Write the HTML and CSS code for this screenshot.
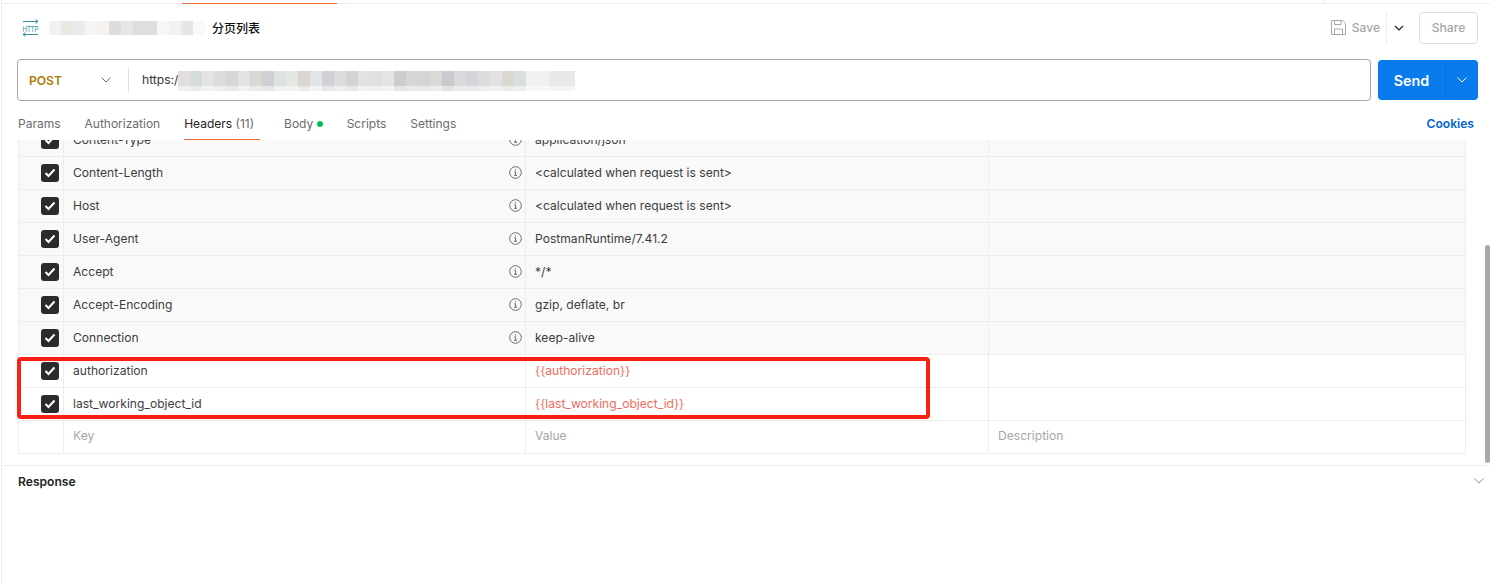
FILE: index.html
```html
<!DOCTYPE html>
<html lang="en">
<head>
    <meta charset="UTF-8">
    <title>分页列表</title>
    <link rel="stylesheet" href="styles.css">
</head>
<body>
    <div class="app">
        <div class="top-strip"><div class="top-tab"></div><div class="top-tab-end"></div></div>

        <div class="req-head">
            <svg class="http-icon" width="18" height="18" viewBox="0 0 18 18" fill="none" stroke="#2f8f9d" stroke-width="1">
                <path d="M1 2.500h15M13.500 .5l2.500 2-2.500 2M1 15.500h15M3.500 13.500l-2.500 2 2.500 2"/>
                <text x="0.500" y="12.500" class="http-text" textLength="16" lengthAdjust="spacingAndGlyphs">HTTP</text>
            </svg>
            <div class="mosaic-title"></div>
            <span class="req-name">分页列表</span>
            <div class="head-actions">
                <svg class="save-icon" width="15" height="15" viewBox="0 0 15 15" fill="none" stroke="#a6a6a6" stroke-width="1">
                    <path d="M.5.500h11l3 3v11H.5z"/>
                    <path d="M3.500.500v4h6.500v-4M3.500 14.500v-5.500h8v5.500"/>
                </svg>
                <span class="save-text">Save</span>
                <div class="save-divider"></div>
                <svg class="save-caret" width="10" height="6" viewBox="0 0 10 6" fill="none" stroke="#212121" stroke-width="1.200"><path d="M1 1l4 4 4-4"/></svg>
                <div class="share-btn">Share</div>
            </div>
        </div>

        <div class="url-row">
            <div class="url-bar">
                <div class="method">
                    <span>POST</span>
                    <svg width="10" height="6" viewBox="0 0 10 6" fill="none" stroke="#6b6b6b"><path d="M.5.500l4.500 4.500 4.500-4.500"/></svg>
                </div>
                <div class="url-text">https:/<div class="mosaic-url"></div></div>
            </div>
            <div class="send-btn">
                <span class="send-label">Send</span>
                <span class="send-caret">
                    <svg width="10" height="6" viewBox="0 0 10 6" fill="none" stroke="#fff"><path d="M.5.500l4.500 4.500 4.500-4.500"/></svg>
                </span>
            </div>
        </div>

        <div class="tabs">
            <span class="tab">Params</span>
            <span class="tab">Authorization</span>
            <span class="tab active">Headers <em>(11)</em></span>
            <span class="tab">Body <i class="dot"></i></span>
            <span class="tab">Scripts</span>
            <span class="tab">Settings</span>
            <span class="cookies">Cookies</span>
        </div>

        <div class="table-wrap">
            <div class="table">
                <div class="row auto">
                    <div class="cell check"><span class="box"><svg width="12" height="10" viewBox="0 0 12 10" fill="none" stroke="#fff" stroke-width="2"><path d="M1.500 5l3 3 6-6.500"/></svg></span></div>
                    <div class="cell key"><span>Content-Type</span><svg class="info" width="13" height="13" viewBox="0 0 13 13" fill="none" stroke="#6b6b6b"><circle cx="6.500" cy="6.500" r="5.800"/><path d="M5.300 5.800h1.300v3.200M5 9.300h3M6.500 3.300v1.200"/></svg></div>
                    <div class="cell">application/json</div>
                    <div class="cell"></div>
                </div>
                <div class="row auto">
                    <div class="cell check"><span class="box"><svg width="12" height="10" viewBox="0 0 12 10" fill="none" stroke="#fff" stroke-width="2"><path d="M1.500 5l3 3 6-6.500"/></svg></span></div>
                    <div class="cell key"><span>Content-Length</span><svg class="info" width="13" height="13" viewBox="0 0 13 13" fill="none" stroke="#6b6b6b"><circle cx="6.500" cy="6.500" r="5.800"/><path d="M5.300 5.800h1.300v3.200M5 9.300h3M6.500 3.300v1.200"/></svg></div>
                    <div class="cell">&lt;calculated when request is sent&gt;</div>
                    <div class="cell"></div>
                </div>
                <div class="row auto">
                    <div class="cell check"><span class="box"><svg width="12" height="10" viewBox="0 0 12 10" fill="none" stroke="#fff" stroke-width="2"><path d="M1.500 5l3 3 6-6.500"/></svg></span></div>
                    <div class="cell key"><span>Host</span><svg class="info" width="13" height="13" viewBox="0 0 13 13" fill="none" stroke="#6b6b6b"><circle cx="6.500" cy="6.500" r="5.800"/><path d="M5.300 5.800h1.300v3.200M5 9.300h3M6.500 3.300v1.200"/></svg></div>
                    <div class="cell">&lt;calculated when request is sent&gt;</div>
                    <div class="cell"></div>
                </div>
                <div class="row auto">
                    <div class="cell check"><span class="box"><svg width="12" height="10" viewBox="0 0 12 10" fill="none" stroke="#fff" stroke-width="2"><path d="M1.500 5l3 3 6-6.500"/></svg></span></div>
                    <div class="cell key"><span>User-Agent</span><svg class="info" width="13" height="13" viewBox="0 0 13 13" fill="none" stroke="#6b6b6b"><circle cx="6.500" cy="6.500" r="5.800"/><path d="M5.300 5.800h1.300v3.200M5 9.300h3M6.500 3.300v1.200"/></svg></div>
                    <div class="cell">PostmanRuntime/7.41.2</div>
                    <div class="cell"></div>
                </div>
                <div class="row auto">
                    <div class="cell check"><span class="box"><svg width="12" height="10" viewBox="0 0 12 10" fill="none" stroke="#fff" stroke-width="2"><path d="M1.500 5l3 3 6-6.500"/></svg></span></div>
                    <div class="cell key"><span>Accept</span><svg class="info" width="13" height="13" viewBox="0 0 13 13" fill="none" stroke="#6b6b6b"><circle cx="6.500" cy="6.500" r="5.800"/><path d="M5.300 5.800h1.300v3.200M5 9.300h3M6.500 3.300v1.200"/></svg></div>
                    <div class="cell">*/*</div>
                    <div class="cell"></div>
                </div>
                <div class="row auto">
                    <div class="cell check"><span class="box"><svg width="12" height="10" viewBox="0 0 12 10" fill="none" stroke="#fff" stroke-width="2"><path d="M1.500 5l3 3 6-6.500"/></svg></span></div>
                    <div class="cell key"><span>Accept-Encoding</span><svg class="info" width="13" height="13" viewBox="0 0 13 13" fill="none" stroke="#6b6b6b"><circle cx="6.500" cy="6.500" r="5.800"/><path d="M5.300 5.800h1.300v3.200M5 9.300h3M6.500 3.300v1.200"/></svg></div>
                    <div class="cell">gzip, deflate, br</div>
                    <div class="cell"></div>
                </div>
                <div class="row auto">
                    <div class="cell check"><span class="box"><svg width="12" height="10" viewBox="0 0 12 10" fill="none" stroke="#fff" stroke-width="2"><path d="M1.500 5l3 3 6-6.500"/></svg></span></div>
                    <div class="cell key"><span>Connection</span><svg class="info" width="13" height="13" viewBox="0 0 13 13" fill="none" stroke="#6b6b6b"><circle cx="6.500" cy="6.500" r="5.800"/><path d="M5.300 5.800h1.300v3.200M5 9.300h3M6.500 3.300v1.200"/></svg></div>
                    <div class="cell">keep-alive</div>
                    <div class="cell"></div>
                </div>
                <div class="row">
                    <div class="cell check"><span class="box"><svg width="12" height="10" viewBox="0 0 12 10" fill="none" stroke="#fff" stroke-width="2"><path d="M1.500 5l3 3 6-6.500"/></svg></span></div>
                    <div class="cell key"><span>authorization</span></div>
                    <div class="cell var">{{authorization}}</div>
                    <div class="cell"></div>
                </div>
                <div class="row">
                    <div class="cell check"><span class="box"><svg width="12" height="10" viewBox="0 0 12 10" fill="none" stroke="#fff" stroke-width="2"><path d="M1.500 5l3 3 6-6.500"/></svg></span></div>
                    <div class="cell key"><span>last_working_object_id</span></div>
                    <div class="cell var">{{last_working_object_id}}</div>
                    <div class="cell"></div>
                </div>
                <div class="row hint-row">
                    <div class="cell check"></div>
                    <div class="cell key hint"><span>Key</span></div>
                    <div class="cell hint">Value</div>
                    <div class="cell hint">Description</div>
                </div>
            </div>
            <div class="red-box"></div>
        </div>

        <div class="response">
            <span>Response</span>
            <svg width="10" height="6" viewBox="0 0 10 6" fill="none" stroke="#8c8c8c"><path d="M.5.500l4.500 4.500 4.500-4.500"/></svg>
        </div>

        <div class="scrollbar"></div>
    </div>
</body>
</html>
```

FILE: styles.css
```css
* {
    box-sizing: border-box;
    margin: 0;
    padding: 0;
}
body {
    width: 1490px;
    height: 584px;
    overflow: hidden;
    background-color: #fff;
    font-family: "Inter", "Noto Sans CJK SC", sans-serif;
    font-size: 12.100px;
    color: #212121;
}
.app {
    position: relative;
    height: 584px;
    margin-left: 1px;
    border-left: 1px solid #ededed;
}

/* top strip */
.top-strip {
    display: flex;
    height: 4px;
    border-bottom: 1px solid #ededed;
    padding-left: 180px;
}
.top-tab {
    width: 155px;
    height: 4px;
    border-bottom: 1px solid #f26b3a;
}
.top-tab-end {
    width: 1px;
    height: 3px;
    margin-left: 986px;
    background-color: #ededed;
}

/* request name */
.req-head {
    display: flex;
    align-items: center;
    height: 47px;
    padding-left: 20px;
}
.http-icon {
    overflow: visible;
}
.http-text {
    font-family: "Liberation Sans", sans-serif;
    font-size: 8.500px;
    fill: #2f8f9d;
    stroke: none;
}
.mosaic-title {
    width: 156px;
    height: 14px;
    margin-left: 9px;
    background: linear-gradient(90deg,
        #f2f2f2 0 12px, #e9e9e2 12px 24px, #e9ebed 24px 36px, #f5f5f5 36px 48px,
        #f6f2ef 48px 60px, #dddde0 60px 72px, #e7e7ea 72px 84px, #dedede 84px 108px,
        #f7f7f7 108px 120px, #f2f2f2 120px 132px, #e6e6e6 132px 144px, #fafafa 144px 156px);
}
.req-name {
    margin-left: 7px;
    font-size: 12px;
    font-weight: 500;
    color: #111;
}
.head-actions {
    display: flex;
    align-items: center;
    margin-left: auto;
    padding-right: 12px;
}
.save-text {
    margin-left: 6px;
    color: #a6a6a6;
    font-weight: 500;
}
.save-divider {
    width: 1px;
    height: 32px;
    margin-left: 6px;
    background-color: #ededed;
}
.save-caret {
    margin-left: 7px;
}
.share-btn {
    display: flex;
    align-items: center;
    justify-content: center;
    width: 59px;
    height: 32px;
    margin-left: 15px;
    border: 1px solid #dedede;
    border-radius: 4px;
    color: #a6a6a6;
    font-weight: 500;
}

/* url */
.url-row {
    display: flex;
    height: 42px;
    margin-top: 8px;
    padding-left: 15px;
}
.url-bar {
    display: flex;
    align-items: center;
    width: 1354px;
    border: 1px solid #a6a6a6;
    border-radius: 4px;
}
.method {
    display: flex;
    align-items: center;
    justify-content: space-between;
    width: 111px;
    height: 24px;
    padding: 0 17px 0 11px;
    border-right: 1px solid #e0e0e0;
    color: #ad7a03;
    font-weight: 600;
}
.url-text {
    display: flex;
    align-items: center;
    padding: 0 0 2px 13px;
    color: #333;
}
.mosaic-url {
    width: 397px;
    height: 20px;
    margin-top: 3px;
    background: linear-gradient(180deg, transparent 0 15px, rgba(255,255,255,.5) 15px),
        linear-gradient(90deg,
        #e2dedf 0 12px, #d5dadb 12px 24px, #e4e4e4 24px 36px, #dcdcdc 36px 48px,
        #d6d6d8 48px 60px, #e3e3e3 60px 72px, #dad7d5 72px 84px, #cfcfd4 84px 96px,
        #dfe2e2 96px 108px, #e6e6e4 108px 120px, #dbd6d3 120px 132px, #e2e6e8 132px 144px,
        #cfd1d4 144px 156px, #dedcda 156px 168px, #d4d2d4 168px 180px, #e2e2e2 180px 192px,
        #dee0e2 192px 204px, #e3e5e2 204px 216px, #cccccf 216px 228px, #d6d5d7 228px 240px,
        #d2d5d6 240px 252px, #dcd8d8 252px 264px, #c9cacd 264px 276px, #d9d9db 276px 288px,
        #d5d4da 288px 300px, #dcdcdc 300px 312px, #e2e2e4 312px 324px, #dbd8d0 324px 336px,
        #d8dfe0 336px 348px, #f0f0f0 348px 372px, #e6e8ea 372px 397px);
}
.send-btn {
    display: flex;
    height: 40px;
    margin: 1px 0 0 7px;
    border-radius: 4px;
    background-color: #097bed;
    color: #fff;
}
.send-label {
    display: flex;
    align-items: center;
    justify-content: center;
    width: 68px;
    border-right: 1px solid #0a6fd6;
    font-size: 14.300px;
    font-weight: 600;
}
.send-caret {
    display: flex;
    align-items: center;
    justify-content: center;
    width: 32px;
}

/* tabs */
.tabs {
    display: flex;
    align-items: flex-end;
    gap: 24px;
    height: 39px;
    padding: 0 16px 0 16px;
    font-size: 12px;
}
.tab {
    display: flex;
    align-items: center;
    height: 33px;
    color: #6b6b6b;
    white-space: pre;
}
.tab.active {
    padding: 1px 6px 0 0;
    border-bottom: 1px solid #f26b3a;
    color: #212121;
}
.tab em {
    font-style: normal;
    color: #6b6b6b;
}
.dot {
    width: 6px;
    height: 6px;
    border-radius: 50%;
    background-color: #0cbb52;
}
.cookies {
    height: 33px;
    line-height: 33px;
    margin-left: auto;
    color: #0265d2;
    font-size: 12.100px;
    font-weight: 600;
}

/* headers table */
.table-wrap {
    position: relative;
    height: 326px;
    overflow: hidden;
    border-bottom: 1px solid #ededed;
}
.table {
    width: 1448px;
    margin: -16px 0 0 16px;
    border-left: 1px solid #ededed;
    border-right: 1px solid #ededed;
}
.row {
    display: grid;
    grid-template-columns: 45px 462px 463px 477px;
    height: 33px;
    border-bottom: 1px solid #ededed;
}
.row.auto {
    background-color: #f9f9f9;
}
.cell {
    display: flex;
    align-items: center;
    padding: 0 0 1px 9px;
    border-right: 1px solid #ededed;
    color: #3d3d3d;
    white-space: nowrap;
}
.cell:last-child {
    border-right: none;
}
.check {
    justify-content: flex-end;
    padding: 0 4px 0 0;
}
.box {
    display: flex;
    align-items: center;
    justify-content: center;
    width: 18px;
    height: 18px;
    border-radius: 3px;
    background-color: #2b2b2b;
}
.key {
    justify-content: space-between;
    padding-right: 3px;
}
.var {
    color: #f26b5e;
}
.hint-row .cell {
    padding-bottom: 3px;
}
.hint, .hint span {
    color: #a6a6a6;
}
.red-box {
    position: absolute;
    top: 217px;
    left: 15px;
    width: 913px;
    height: 62px;
    border: 4px solid #fb1f14;
    border-radius: 4px;
}

/* response */
.response {
    display: flex;
    align-items: center;
    justify-content: space-between;
    height: 32px;
    padding: 0 6px 2px 16px;
    font-weight: 600;
}
.scrollbar {
    position: absolute;
    top: 245px;
    right: 0;
    width: 5px;
    height: 218px;
    border-radius: 3px;
    background-color: #a8a8a8;
}
```
